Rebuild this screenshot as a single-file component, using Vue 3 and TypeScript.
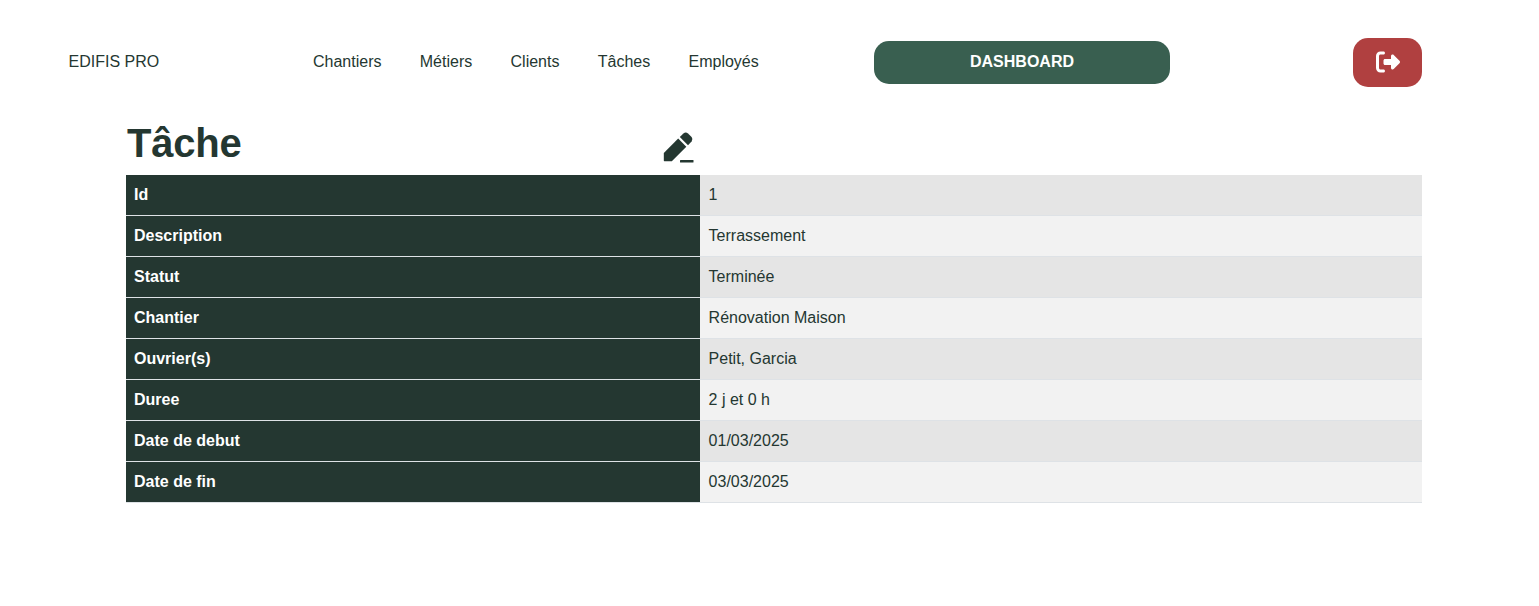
<script setup lang="ts">
interface Row {
  label: string
  value: string
}

const links: string[] = ['Chantiers', 'Métiers', 'Clients', 'Tâches', 'Employés']

const rows: Row[] = [
  { label: 'Id', value: '1' },
  { label: 'Description', value: 'Terrassement' },
  { label: 'Statut', value: 'Terminée' },
  { label: 'Chantier', value: 'Rénovation Maison' },
  { label: 'Ouvrier(s)', value: 'Petit, Garcia' },
  { label: 'Duree', value: '2 j et 0 h' },
  { label: 'Date de debut', value: '01/03/2025' },
  { label: 'Date de fin', value: '03/03/2025' },
]
</script>

<template>
  <div class="page">
    <header class="navbar">
      <a class="brand">EDIFIS PRO</a>
      <nav class="links">
        <a v-for="link in links" :key="link">{{ link }}</a>
      </nav>
      <button class="dashboard" type="button">DASHBOARD</button>
      <button class="logout" type="button" aria-label="Déconnexion">
        <svg width="24" height="24" viewBox="0 0 512 512" fill="currentColor">
          <path
            d="M377.9 105.9L500.7 228.7c7.2 7.2 11.3 17.1 11.3 27.3s-4.1 20.1-11.3 27.3L377.9 406.1c-6.4 6.4-15 9.9-24 9.9c-18.7 0-33.9-15.2-33.9-33.9l0-62.1-128 0c-17.7 0-32-14.3-32-32l0-64c0-17.7 14.3-32 32-32l128 0 0-62.1c0-18.7 15.2-33.9 33.9-33.9c9 0 17.6 3.6 24 9.9zM160 96L96 96c-17.7 0-32 14.3-32 32l0 256c0 17.7 14.3 32 32 32l64 0c17.7 0 32 14.3 32 32s-14.3 32-32 32l-64 0c-53 0-96-43-96-96L0 128C0 75 43 32 96 32l64 0c17.7 0 32 14.3 32 32s-14.3 32-32 32z"
          />
        </svg>
      </button>
    </header>
    <main class="content">
      <div class="heading">
        <h1>Tâche</h1>
        <svg class="edit" width="40" height="40" viewBox="0 0 40 40" fill="currentColor">
          <path d="M3.8 25 18.2 10.6 26.3 18.7 11.8 33.2H4.4Q3.8 33.2 3.8 32.6Z" />
          <path d="M19.8 9 23.4 5.4Q25.7 3.7 28 5.4L31.6 9Q33.4 11.3 31.6 13.6L28 17.2Z" />
          <rect x="20" y="32" width="13.5" height="2.5" rx="0.5" />
        </svg>
      </div>
      <table>
        <tbody>
          <tr v-for="row in rows" :key="row.label">
            <th scope="row">{{ row.label }}</th>
            <td>{{ row.value }}</td>
          </tr>
        </tbody>
      </table>
    </main>
  </div>
</template>

<style>
body {
  margin: 0;
  background: #fff;
}
</style>

<style scoped>
.page {
  box-sizing: border-box;
  min-height: 606px;
  padding-top: 38px;
  color: #243731;
  font-family: Arial, 'Liberation Sans', sans-serif;
  font-size: 16px;
  line-height: 24px;
}

.navbar {
  display: grid;
  grid-template-columns: 244.5px 561px 296px 1fr;
  align-items: center;
  height: 49px;
  margin: 0 117px 0 68.5px;
}

.brand,
.links {
  position: relative;
  top: -1px;
}

.links {
  display: flex;
  gap: 38.3px;
}

button {
  display: flex;
  align-items: center;
  justify-content: center;
  padding: 0;
  border: 0;
  color: #fff;
  font: inherit;
}

.dashboard {
  height: 43px;
  padding-bottom: 2px;
  border-radius: 15px;
  background: #395f50;
  font-weight: 700;
}

.logout {
  box-sizing: border-box;
  justify-self: end;
  width: 69px;
  height: 49px;
  padding-bottom: 1px;
  border-radius: 15px;
  background: #b04040;
}

.content {
  width: 1296px;
  margin-left: 126px;
}

.heading {
  display: flex;
  align-items: flex-start;
  justify-content: space-between;
  width: 574px;
  height: 56px;
  padding-top: 32px;
}

h1 {
  margin: 0;
  padding-left: 1px;
  font-size: 40px;
  font-weight: 700;
  letter-spacing: -0.2px;
  line-height: 48px;
}

.edit {
  margin-top: 9px;
}

table {
  width: 100%;
  border-spacing: 0;
  table-layout: fixed;
}

th,
td {
  box-sizing: border-box;
  height: 41px;
  padding: 8px;
  border-bottom: 1px solid #dee2e6;
  text-align: left;
}

th {
  width: 574px;
  background: #243731;
  color: #fff;
}

td {
  padding-left: 8.6px;
  background: #f2f2f2;
}

tr:nth-child(odd) td {
  background: #e5e5e5;
}
</style>
